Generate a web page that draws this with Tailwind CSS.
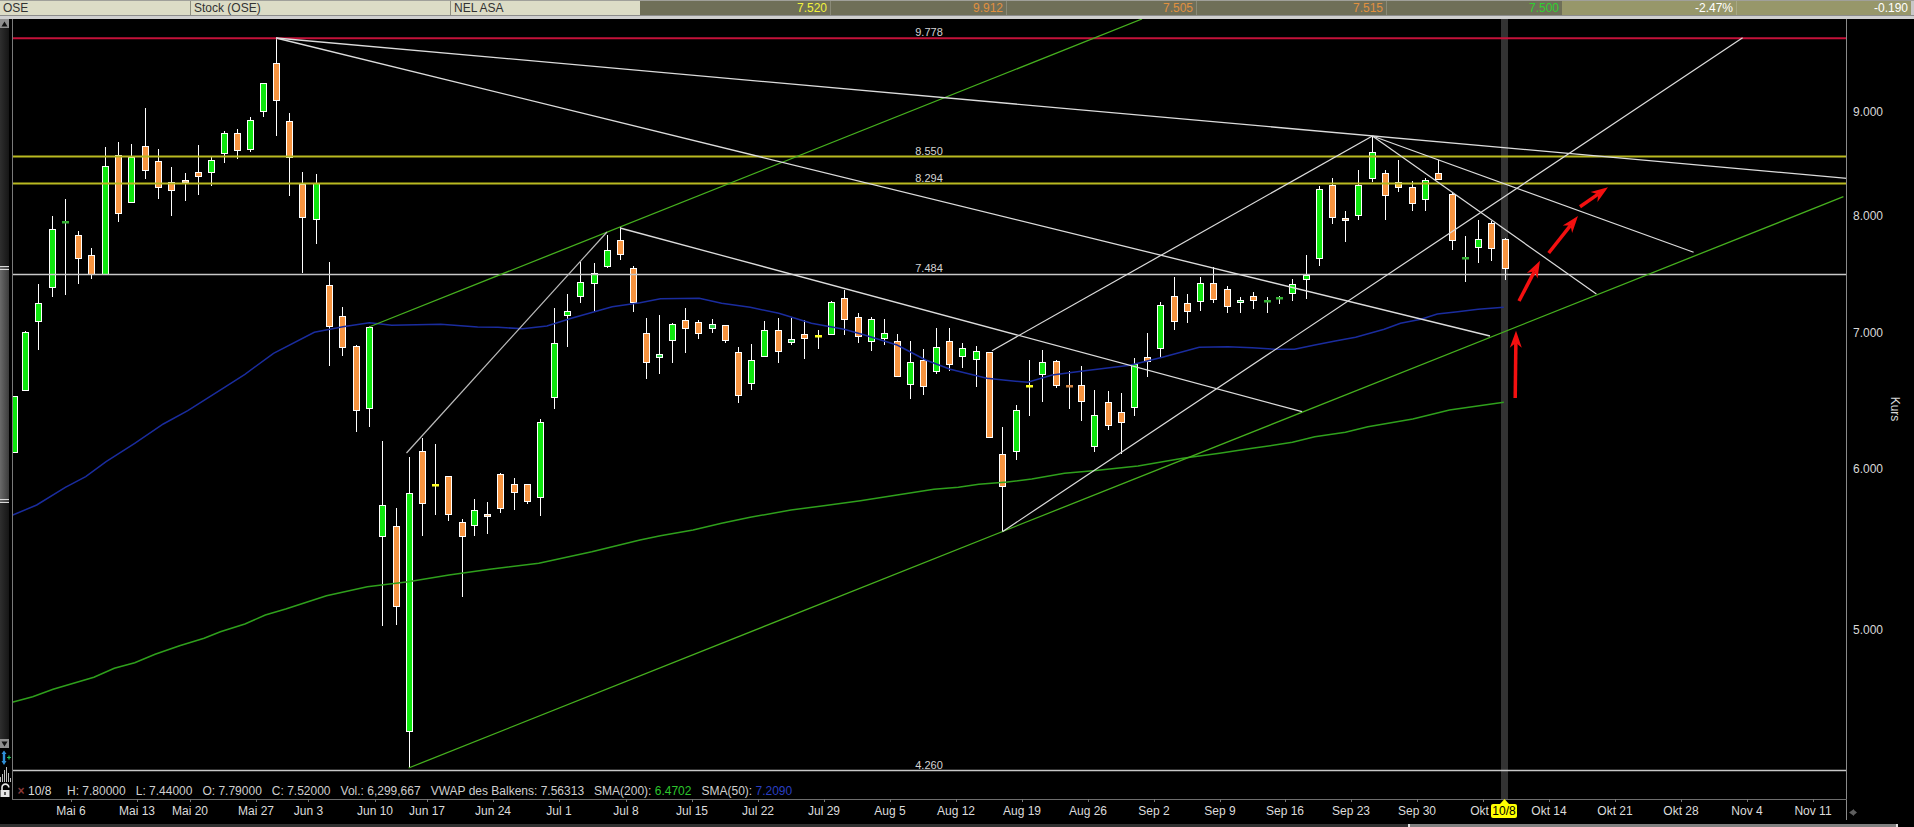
<!doctype html>
<html>
<head>
<meta charset="utf-8">
<title>NEL ASA</title>
<script src="https://cdn.jsdelivr.net/npm/@tailwindcss/browser@4"></script>
</head>
<body class="bg-black">
<div class="w-[1914px] h-[827px] overflow-hidden flex flex-col bg-black font-['Liberation_Sans',Arial,sans-serif] text-[12px] leading-[15px]">
  <!-- header -->
  <div class="flex h-[15px] shrink-0 border-t border-[#a0a09a]">
    <div class="w-[191px] bg-[#dcdcc6] text-[#333] pl-[3px] border-r border-[#8f8f80]">OSE</div>
    <div class="w-[260px] bg-[#dcdcc6] text-[#333] pl-[3px] border-r border-[#8f8f80]">Stock (OSE)</div>
    <div class="w-[189px] bg-[#dcdcc6] text-[#333] pl-[3px]">NEL ASA</div>
    <div class="w-[191px] bg-[#6f6f58] text-[#f2f23c] text-right pr-[3px] border-r border-[#8a8a78]">7.520</div>
    <div class="w-[176px] bg-[#6f6f58] text-[#e0903f] text-right pr-[3px] border-r border-[#8a8a78]">9.912</div>
    <div class="w-[190px] bg-[#6f6f58] text-[#e0903f] text-right pr-[3px] border-r border-[#8a8a78]">7.505</div>
    <div class="w-[190px] bg-[#6f6f58] text-[#e0903f] text-right pr-[3px] border-r border-[#8a8a78]">7.515</div>
    <div class="w-[175px] bg-[#6f6f58] text-[#30d030] text-right pr-[3px]">7.500</div>
    <div class="w-[175px] bg-[#97976a] text-white text-right pr-[3px] border-r border-[#a8a884]">-2.47%</div>
    <div class="w-[174px] bg-[#97976a] text-white text-right pr-[3px]">-0.190</div>
    <div class="flex-1 bg-[#c8c8c8]"></div>
  </div>
  <div class="h-[4px] shrink-0 bg-[#cfcfcf] border-t border-[#8c8c8c]"></div>

  <!-- main -->
  <div class="flex h-[805px] shrink-0">
    <!-- left rail -->
    <div class="w-[12px] shrink-0 flex flex-col bg-black">
      <div class="w-[9px] h-[9px] bg-[#8f8f8f] flex items-center justify-center">
        <svg width="7" height="6" viewBox="0 0 7 6"><path d="M3.5 0.5 L6.5 5.5 H0.5 Z" fill="#111"/></svg>
      </div>
      <div class="w-[9px] h-[238px] bg-linear-to-r from-[#2e2e2e] to-[#161616]"></div>
      <div class="w-[9px] h-[237px] bg-linear-to-r from-[#6a6a6a] to-[#3c3c3c] flex flex-col justify-between">
        <div class="h-[4px] border-y border-[#d8d8d8]"></div>
        <div class="h-[4px] border-y border-[#d8d8d8]"></div>
      </div>
      <div class="w-[9px] h-[236px] bg-linear-to-r from-[#2e2e2e] to-[#161616]"></div>
      <div class="w-[9px] h-[9px] bg-[#8f8f8f] flex items-center justify-center">
        <svg width="7" height="6" viewBox="0 0 7 6"><path d="M0.5 0.5 H6.5 L3.5 5.5 Z" fill="#111"/></svg>
      </div>
      <svg class="mt-[2px]" width="12" height="16" viewBox="0 0 12 16">
        <path d="M4 0.5 L6.5 4 H5.2 V11 H6.5 L4 15 L1.5 11 H2.8 V4 H1.5 Z" fill="#2f8fd8"/>
        <path d="M7 7.5 H11 M9 5.5 V9.5" stroke="#22c05a" stroke-width="1.2"/>
      </svg>
      <svg class="mt-[1px]" width="12" height="15" viewBox="0 0 12 15">
        <path d="M0.5 15 V10 M2.5 15 V7 M4.5 15 V3 M6.5 15 V0 M8.5 15 V6 M10.5 15 V11" stroke="#bdbdbd" stroke-width="1"/>
      </svg>
      <svg class="mt-[1px]" width="12" height="15" viewBox="0 0 12 15">
        <path d="M2 7 V4.5 A3.4 3.4 0 0 1 8.8 4.5" fill="none" stroke="#e6e6e6" stroke-width="1.6"/>
        <path d="M0.5 7 H9.5 V14 H0.5 Z M4.4 9 V12 H5.6 V9 Z" fill="#e6e6e6" fill-rule="evenodd"/>
      </svg>
    </div>

    <!-- chart -->
    <div class="relative w-[1902px] h-[805px]">
      <svg id="chart" width="1902" height="805" viewBox="12 19 1902 805" class="block bg-black">
        <rect x="1501" y="19" width="7" height="780" fill="#333333"/>
        <g id="candles"></g>
        <g id="lines" fill="none"></g>

        <g fill="#d4d4d4" font-size="11" text-anchor="middle">
          <text x="929" y="36">9.778</text>
          <text x="929" y="154.5">8.550</text>
          <text x="929" y="181.5">8.294</text>
          <text x="929" y="271.5">7.484</text>
          <text x="929" y="769">4.260</text>
        </g>

        <!-- frame -->
        <path d="M12.5 19 V799" stroke="#7a7a7a" stroke-width="1"/>
        <path d="M1846.5 19 V820" stroke="#8a8a8a" stroke-width="1"/>
        <path d="M12 799.5 H1847" stroke="#6e6e6e" stroke-width="1"/>

        <!-- right axis -->
        <g fill="#d8d8d8" font-size="12" text-anchor="middle">
          <text x="1868" y="116">9.000</text>
          <text x="1868" y="220">8.000</text>
          <text x="1868" y="337">7.000</text>
          <text x="1868" y="473">6.000</text>
          <text x="1868" y="634">5.000</text>
          <text transform="rotate(90 1891 409)" x="1891" y="409" text-anchor="middle">Kurs</text>
        </g>

        <!-- time axis -->
        <g stroke="#7a7a7a" stroke-width="1">
          <path d="M71.5 799V802 M137.5 799V802 M190.5 799V802 M256.5 799V802 M308.5 799V802 M375.5 799V802 M427.5 799V802 M493.5 799V802 M559.5 799V802 M626.5 799V802 M692.5 799V802 M758.5 799V802 M824.5 799V802 M890.5 799V802 M956.5 799V802 M1022.5 799V802 M1088.5 799V802 M1154.5 799V802 M1220.5 799V802 M1285.5 799V802 M1351.5 799V802 M1417.5 799V802 M1483.5 799V802 M1549.5 799V802 M1615.5 799V802 M1681.5 799V802 M1747.5 799V802 M1813.5 799V802"/>
        </g>
        <g fill="#dcdcdc" font-size="12" text-anchor="middle">
          <text x="71" y="815">Mai 6</text>
          <text x="137" y="815">Mai 13</text>
          <text x="190" y="815">Mai 20</text>
          <text x="256" y="815">Mai 27</text>
          <text x="308.5" y="815">Jun 3</text>
          <text x="375" y="815">Jun 10</text>
          <text x="427" y="815">Jun 17</text>
          <text x="493" y="815">Jun 24</text>
          <text x="559" y="815">Jul 1</text>
          <text x="626" y="815">Jul 8</text>
          <text x="692" y="815">Jul 15</text>
          <text x="758" y="815">Jul 22</text>
          <text x="824" y="815">Jul 29</text>
          <text x="890" y="815">Aug 5</text>
          <text x="956" y="815">Aug 12</text>
          <text x="1022" y="815">Aug 19</text>
          <text x="1088" y="815">Aug 26</text>
          <text x="1154" y="815">Sep 2</text>
          <text x="1220" y="815">Sep 9</text>
          <text x="1285" y="815">Sep 16</text>
          <text x="1351" y="815">Sep 23</text>
          <text x="1417" y="815">Sep 30</text>
          <text x="1479.5" y="815">Okt</text>
          <text x="1549" y="815">Okt 14</text>
          <text x="1615" y="815">Okt 21</text>
          <text x="1681" y="815">Okt 28</text>
          <text x="1747" y="815">Nov 4</text>
          <text x="1813" y="815">Nov 11</text>
        </g>

        <!-- date marker -->
        <path d="M1504.5 799 L1509 804 H1500 Z" fill="#ffff00"/>
        <rect x="1491" y="804" width="26" height="14" rx="2" fill="#ffff00"/>
        <text x="1504" y="815" font-size="12" text-anchor="middle" fill="#000">10/8</text>
        <path d="M1849 812.5 L1854 809 V816 Z M1854 810 L1857 812.5 L1854 815 Z" fill="#5e5e5e"/>
      </svg>

      <!-- data legend over the chart -->
      <div class="absolute left-[3px] top-[764px] flex items-center text-[#cfcfcf] h-[16px]">
        <span class="w-[12px] text-[#8a3a3a] font-bold text-center">×</span>
        <span class="ml-[1px] w-[36px] text-[#dcdcdc]">10/8</span>
        <span class="ml-[3px] flex gap-[10px]">
          <span>H: 7.80000</span>
          <span>L: 7.44000</span>
          <span>O: 7.79000</span>
          <span>C: 7.52000</span>
          <span>Vol.: 6,299,667</span>
          <span>VWAP des Balkens: 7.56313</span>
          <span>SMA(200): <span class="text-[#2cc52c]">6.4702</span></span>
          <span>SMA(50): <span class="text-[#2a3fc0]">7.2090</span></span>
        </span>
      </div>
    </div>
  </div>

  <!-- bottom strip -->
  <div class="flex h-[3px] shrink-0">
    <div class="w-[1408px] bg-[#303030]"></div>
    <div class="w-[490px] bg-[#808080] border-x-2 border-[#e0e0e0]"></div>
    <div class="flex-1 bg-black"></div>
  </div>
</div>

<script>
var ORANGE='#f79440', GREEN='#0ee60e';
// [x, high, bodyTop, bodyBottom, low, colour]; o=orange g=green; doji: y yellow, d dark green, m light, r brownish
var rows=[
[0,13.5,396,396,453,453,'g'],[0,25.3,331,332,391,391,'g'],[0,38.4,284,303,322,350,'g'],[0,52.2,216,229,288,297,'g'],
[0,65.3,199,221,223,295,'d'],[0,78.4,231,235,259,284,'o'],[0,91.4,248,255,275,279,'o'],[0,104.5,147,166,275,275,'g'],
[0,118.4,142,155,214,222,'o'],[0,131.4,144,157,203,203,'g'],[0,144.5,108,146,171,179,'o'],[0,157.6,149,161,188,199,'o'],
[0,170.6,167,182,191,216,'o'],[0,184.5,173,180,183,201,'l'],[0,197.6,145,172,177,195,'o'],[0,210.6,157,160,173,186,'g'],
[0,223.7,131,133,154,163,'g'],[0,236.7,129,133,151,159,'o'],[0,250.2,117,120,150,152,'g'],[0,263.3,83,83,112,117,'g'],
[0,276.3,38,63,101,136,'o'],[0,289.4,113,121,158,196,'o'],[0,302.4,172,184,218,273,'o'],[0,316.3,174,183,220,244,'g'],
[0,329.4,262,285,327,366,'o'],[0,342.4,307,316,348,356,'o'],[0,355.5,345,346,411,432,'o'],[0,368.6,326,327,409,427,'g'],
[0,382.4,441,505,537,626,'g'],[0,395.5,508,526,607,625,'o'],[0,408.6,457,493,732,768,'g'],[0,421.6,438,451,504,536,'o'],
[0,434.7,444,484,486,515,'y'],[0,448.2,476,476,515,521,'o'],[0,461.6,519,522,537,597,'o'],[0,474.3,499,510,526,536,'g'],
[0,487.3,502,514,517,534,'l'],[0,500.4,473,474,509,513,'o'],[0,514.3,478,484,493,510,'o'],[0,527.3,484,484,502,504,'o'],
[0,540.4,419,422,498,516,'g'],[0,553.5,308,343,398,409,'g'],[0,566.5,294,311,316,347,'g'],[0,580.4,262,282,297,303,'g'],
[0,593.5,263,273,284,312,'g'],[0,606.5,235,250,267,268,'g'],[0,619.6,227,240,255,260,'o'],[0,632.7,266,268,303,312,'o'],
[640,15,318,333,363,379,'o'],[640,47,315,354,358,374,'G'],[640,79,323,324,341,363,'g'],[640,111,308,320,329,353,'o'],
[640,143,320,322,334,339,'o'],[640,177,319,324,329,333,'G'],[640,209,325,325,341,343,'o'],[640,241,347,352,396,403,'o'],
[640,273,344,360,384,390,'g'],[640,305,321,330,357,357,'g'],[640,339,318,330,352,363,'o'],[640,371,318,339,343,345,'G'],
[640,403,320,334,339,359,'o'],[640,435,330,335,337,349,'y'],[640,467,301,302,335,335,'g'],[640,501,290,298,320,335,'o'],
[640,533,313,317,337,343,'o'],[640,565,317,319,342,351,'g'],[640,597,319,333,339,345,'g'],[640,629,334,341,377,377,'o'],
[640,662,341,362,385,399,'g'],[640,694,349,360,387,395,'o'],[640,726,328,347,372,374,'g'],[640,758,328,341,365,371,'o'],
[640,790,343,348,357,368,'g'],[640,824,346,351,360,387,'g'],[640,856,352,352,438,438,'o'],[640,888,427,454,487,532,'o'],
[640,920,405,410,452,460,'g'],[640,952,360,385,387,416,'y'],[640,986,350,362,375,402,'g'],[640,1018,360,361,386,388,'o'],
[640,1050,371,385,387,409,'r'],[640,1081,366,385,402,421,'o'],[640,1113,390,415,447,452,'g'],[640,1147,391,402,426,430,'o'],
[640,1179,393,412,423,454,'o'],[640,1211,358,364,408,416,'g'],[640,1243,333,357,362,377,'o'],[640,1275,302,305,349,358,'g'],
[640,1309,277,296,322,330,'o'],[640,1341,294,303,312,323,'o'],[640,1373,277,283,302,311,'g'],[640,1405,267,283,300,303,'o'],
[640,1437,286,289,307,313,'o'],[640,1471,297,300,303,313,'G'],[640,1503,292,296,301,309,'o'],[640,1535,297,300,302,313,'d'],
[1274,13,296,297,299,304,'d'],[1274,45,279,284,294,301,'g'],[1274,79,255,275,280,299,'g'],[1274,111,186,189,259,266,'g'],
[1274,143,178,185,218,224,'o'],[1274,175,211,218,221,242,'l'],[1274,207,170,185,216,220,'g'],[1274,241,136,152,179,182,'g'],
[1274,273,170,173,196,220,'o'],[1274,305,160,182,188,192,'Y'],[1274,337,181,187,204,211,'o'],[1274,369,178,180,200,211,'g'],
[1274,403,160,173,180,180,'o'],[1274,435,193,194,241,250,'o'],[1274,467,236,257,259,282,'d'],[1274,499,220,239,248,263,'g'],
[1274,531,221,223,249,261,'o'],[1274,565,238,239,269,280,'o']
];
var h='';
rows.forEach(function(r){
  var X=Math.round(r[0]===0?r[1]:r[0]+r[1]/2.45), hi=r[2], t=r[3], b=r[4], lo=r[5], c=r[6];
  if(lo>hi) h+='<rect x="'+X+'" y="'+hi+'" width="1" height="'+(lo-hi)+'" fill="#ffffff"/>';
  if(c==='y'||c==='d'||c==='r'){
    var col=c==='y'?'#ffff22':c==='d'?'#35b035':'#d08444';
    h+='<rect x="'+(X-3)+'" y="'+t+'" width="7" height="2.5" fill="'+col+'"/>';
  } else {
    var fill=c==='g'||c==='G'?GREEN:c==='l'?'#f9c48c':c==='Y'?'#f7b83c':ORANGE;
    h+='<rect x="'+(X-3)+'" y="'+t+'" width="7" height="'+Math.max(b-t,3)+'" fill="#ffffff"/>';
    h+='<rect x="'+(X-2)+'" y="'+(t+1)+'" width="5" height="'+Math.max(b-t-2,1)+'" fill="'+(c==='G'?'#2fd04a':fill)+'"/>';
  }
});
document.getElementById('candles').innerHTML=h;

function pts(ox,oy,a){var s=[];for(var i=0;i<a.length;i+=2){s.push((ox+a[i]/2.45).toFixed(1)+','+(oy+a[i+1]/3).toFixed(1));}return s.join(' ');}
var sma50=[pts(0,280,[30,706,90,675,160,622,210,590,260,545,330,490,400,432,460,392,550,322,600,283,670,220,770,157,840,140,905,128,960,136,1080,133,1170,141,1220,142,1280,146,1340,138,1400,115,1500,80,1568,68]),
 pts(640,280,[50,56,145,55,200,70,270,82,340,100,420,130,500,148,550,165,630,195,700,240,760,268,850,295,890,300,950,307,1010,285,1090,272,1200,256,1280,232,1370,202,1440,200,1500,203,1555,208]),
 pts(1274,200,[50,448,100,435,150,423,200,412,270,388,310,370,360,358,400,342,450,335,500,328,563,322])].join(' ');
var sma200=[pts(0,480,[30,667,80,650,130,628,230,592,280,565,330,548,380,523,440,497,500,475,540,455,600,432,650,405,700,387,800,347,900,320,1000,305,1100,285,1200,268,1320,250,1450,215,1568,180]),
 pts(640,280,[50,767,130,750,200,730,270,712,370,690,450,677,540,662,630,645,720,628,780,622,830,613,900,606,960,597,1040,580,1110,572,1220,558,1330,535,1420,520,1500,505,1555,495]),
 pts(1274,200,[45,727,100,710,175,697,230,680,340,657,430,630,563,607])].join(' ');
function ln(x1,y1,x2,y2,c,w){return '<line x1="'+x1+'" y1="'+y1+'" x2="'+x2+'" y2="'+y2+'" stroke="'+c+'" stroke-width="'+w+'"/>';}
function arrow(x1,y1,x2,y2){
  var dx=x2-x1,dy=y2-y1,l=Math.sqrt(dx*dx+dy*dy),ux=dx/l,uy=dy/l,nx=-uy,ny=ux,L=17,W=6,N=12;
  var bx=x2-ux*L,by=y2-uy*L,mx=x2-ux*N,my=y2-uy*N;
  return ln(x1,y1,mx,my,'#f41010',3.5)+'<polygon fill="#f41010" points="'+x2+','+y2+' '+(bx+nx*W)+','+(by+ny*W)+' '+mx+','+my+' '+(bx-nx*W)+','+(by-ny*W)+'"/>';
}
var W='#dcdcdc', Gn='#46b01e';
var L='';
L+=ln(12,38.3,1847,38.3,'#c4123a',2);
L+=ln(12,156.5,1847,156.5,'#b9b921',2);
L+=ln(12,183.5,1847,183.5,'#b9b921',2);
L+=ln(12,274.5,1847,274.5,'#c8c8c8',1.3);
L+=ln(12,770.5,1847,770.5,'#c8c8c8',1.3);
L+='<polyline points="'+sma200+'" stroke="#2fa01c" stroke-width="1.5"/>';
L+='<polyline points="'+sma50+'" stroke="#1a2c9e" stroke-width="1.5"/>';
L+=ln(369,327,1142,19,Gn,1.3);
L+=ln(408.6,768,1843.4,196.7,Gn,1.3);
L+=ln(276,38,1847,178.3,W,1.3);
L+=ln(276,38,1490,336,W,1.3);
L+=ln(620,228,1302,411.7,W,1.3);
L+=ln(406.5,453,607,232,'#bdbdbd',1.2);
L+=ln(992,350.7,1372.4,136,W,1.2);
L+=ln(1002.4,531.7,1742.6,37.7,W,1.2);
L+=ln(1372.4,136,1693.6,252.3,W,1.2);
L+=ln(1372.4,136,1596.4,294,W,1.2);
L+=arrow(1515.2,398,1516,330.7);
L+=arrow(1519,301,1540,260.7);
L+=arrow(1548.7,253,1578,216);
L+=arrow(1580,206.7,1608,187.3);
document.getElementById('lines').innerHTML=L;
</script>
</body>
</html>
